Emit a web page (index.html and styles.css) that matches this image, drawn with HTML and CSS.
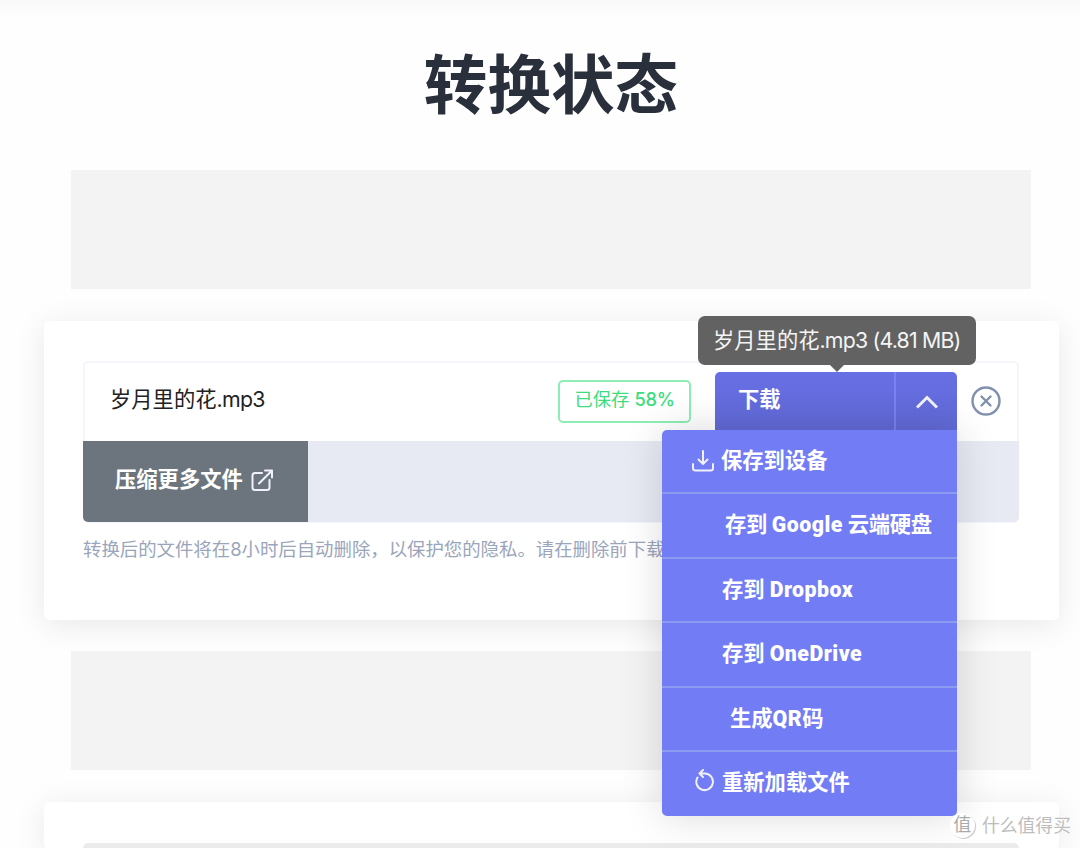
FILE: index.html
```
<!DOCTYPE html>
<html lang="zh">
<head>
	<meta charset="UTF-8">
	<title>转换状态</title>
	<link rel="stylesheet" href="styles.css">
</head>
<body>
	<div class="topline"></div>
	<div class="container">
		<h1 class="title">转换状态</h1>
		<div class="banner"></div>

		<div class="card">
			<div class="file-box">
				<div class="file-row">
					<span class="file-name">岁月里的花<span class="ext">.mp3</span></span>
					<span class="badge">已保存 <span class="percent">58%</span></span>
					<div class="download">
						<a class="btn-download" href="javascript:;"><span>下载</span></a>
						<a class="btn-toggle" href="javascript:;">
							<svg width="24" height="16" viewBox="0 0 24 16"><path d="M2 13.5 12 3.5l10 10"/></svg>
						</a>
						<div class="tooltip">岁月里的花<span class="tip-ext">.mp3 (4.81 MB)</span></div>
						<ul class="menu">
							<li>
								<svg class="icon-save" width="24" height="24" viewBox="0 0 24 24"><path d="M12 2v13M7.500 10.500 12 15l4.500-4.500M2 15v4q0 2.500 2.500 2.500h15q2.500 0 2.500-2.500v-4"/></svg>
								<span class="save">保存到设备</span>
							</li>
							<li><span class="google">存到 <b class="latin">Google</b> 云端硬盘</span></li>
							<li><span class="dropbox">存到 <b class="latin">Dropbox</b></span></li>
							<li><span class="onedrive">存到 <b class="latin">OneDrive</b></span></li>
							<li><span class="qr">生成<b class="latin">QR</b>码</span></li>
							<li>
								<svg class="icon-reload" width="24" height="24" viewBox="0 0 24 24"><path d="M8 4.500h5a8.300 8.300 0 1 1-7.500 4M11 1 7.500 4.500 11 8"/></svg>
								<span class="reload">重新加载文件</span>
							</li>
						</ul>
					</div>
					<a class="btn-close" href="javascript:;">
						<svg width="30" height="30" viewBox="0 0 30 30"><circle cx="15" cy="15" r="13.500"/><path d="m10.500 10.500 9 9m0-9-9 9"/></svg>
					</a>
				</div>
				<div class="more-row">
					<a class="btn-more" href="javascript:;">
						<span>压缩更多文件</span>
						<svg width="24" height="24" viewBox="0 0 24 24"><path d="M12 5H5Q2.500 5 2.500 7.500v12Q2.500 22 5 22h12q2.500 0 2.500-2.500V12M9 15.500 22 2.500M15 2.500h7v7"/></svg>
					</a>
				</div>
			</div>
			<p class="note">转换后的文件将在<span class="hours">8</span>小时后自动删除，以保护您的隐私。请在删除前下载。</p>
		</div>

		<div class="banner second"></div>
		<div class="card next">
			<div class="next-box"></div>
		</div>
	</div>

	<div class="watermark">
		<span class="mark">值</span>
		<span>什么值得买</span>
	</div>
</body>
</html>
```
FILE: styles.css
```
* {
	margin: 0;
	padding: 0;
	box-sizing: border-box;
}
body {
	height: 848px;
	position: relative;
	background: #fefefe;
	font-family: "Inter", "Noto Sans CJK SC", sans-serif;
	font-size: 21.3px;
}
li {
	list-style: none;
}
a {
	text-decoration: none;
}
svg {
	display: block;
	flex: none;
	fill: none;
	stroke: #f0f1fa;
	stroke-width: 2;
	stroke-linecap: round;
	stroke-linejoin: round;
}
.topline {
	height: 16px;
	background: linear-gradient(#f8f8f8, #fefefe);
}
.container {
	width: 1015px;
	height: 832px;
	margin-left: 43.5px;
}
.title {
	height: 154px;
	padding-top: 17px;
	line-height: 94px;
	text-align: center;
	font-family: "Noto Sans CJK SC", sans-serif;
	font-size: 63.6px;
	font-weight: 700;
	color: #29303b;
}
.banner {
	width: 960px;
	height: 119px;
	margin: 0 auto;
	background: #f3f3f3;
}
.banner.second {
	margin-top: 31px;
}

.card {
	height: 299px;
	margin-top: 32px;
	padding: 40px 39.5px;
	border-radius: 5px;
	background: #fff;
	box-shadow: 0 5px 32px rgba(0, 0, 0, 0.09);
}
.file-box {
	height: 162px;
	border: 2px solid #f5f6fb;
	border-radius: 5px;
}
.file-row {
	display: flex;
	height: 78px;
	padding: 0 16px 0 25px;
}
.file-name {
	flex: 1;
	line-height: 72px;
	color: #222;
}
.ext {
	letter-spacing: -0.7px;
}
.badge {
	width: 133px;
	height: 43px;
	margin: 17px 24px 0 0;
	border: 2px solid #8deeb5;
	border-radius: 5px;
	line-height: 35px;
	text-align: center;
	font-size: 18.3px;
	color: #3ddc7e;
	white-space: nowrap;
}
.percent {
	font-weight: 500;
	letter-spacing: -0.3px;
}

/*下载按钮*/
.download {
	display: flex;
	width: 242px;
	height: 59px;
	margin-top: 9px;
	position: relative;
}
.btn-download, .btn-toggle {
	background: linear-gradient(#676fe4, #6169d6);
	color: #fff;
}
.btn-download {
	width: 179px;
	padding-left: 23px;
	border-radius: 5px 0 0 0;
	line-height: 54px;
	font-weight: 700;
}
.btn-toggle {
	flex: 1;
	display: flex;
	align-items: center;
	justify-content: center;
	border-left: 2px solid #7a81f0;
	border-radius: 0 5px 0 0;
}
.btn-toggle svg {
	stroke-width: 3;
	stroke-linecap: butt;
	stroke-linejoin: miter;
}
.tooltip {
	width: 278px;
	height: 49px;
	position: absolute;
	top: -56px;
	left: -17px;
	z-index: 3;
	border-radius: 7px;
	background: #626262;
	line-height: 48px;
	padding-left: 15px;
	color: #f4f4f4;
	white-space: nowrap;
}
.tip-ext {
	letter-spacing: -0.8px;
}
.tooltip::after {
	content: '';
	position: absolute;
	top: 48px;
	left: 131px;
	border: 8px solid transparent;
	border-top-color: #626262;
	border-bottom: 0;
}
.menu {
	width: 295px;
	position: absolute;
	top: 58px;
	right: 0;
	z-index: 2;
	border-radius: 5px 0 5px 5px;
	background: #727cf5;
	box-shadow: 0 0 40px rgba(0, 0, 0, 0.15);
	color: #fff;
	font-weight: 700;
}
.menu li {
	display: flex;
	height: 64.4px;
	padding-left: 60px;
	line-height: 60px;
	border-bottom: 2px solid #8b9bef;
	white-space: nowrap;
}
.menu li:last-child {
	border-bottom: 0;
}
.menu svg {
	margin: 19px 6px 0 -31px;
}
.menu .icon-reload {
	margin: 17px 6px 0 -30px;
}
.latin {
	font-family: "Roboto", sans-serif;
	letter-spacing: 0.5px;
}
.menu .google {
	padding-left: 3px;
	letter-spacing: -0.3px;
}
.menu .qr {
	padding-left: 8px;
}
.btn-close {
	margin: 23px 0 0 14px;
}
.btn-close svg {
	stroke: #8191ad;
	stroke-width: 2.4;
}

.more-row {
	height: 81px;
	margin: 0 -2px;
	border-radius: 0 0 5px 5px;
	background: #e7eaf3;
}
.btn-more {
	display: flex;
	width: 225px;
	height: 81px;
	padding-left: 32px;
	border-radius: 0 0 0 5px;
	background: #6c757d;
	line-height: 77px;
	font-weight: 700;
	color: #fff;
}
.btn-more svg {
	margin: 27px 0 0 7px;
}
.note {
	margin-top: 11px;
	line-height: 30px;
	font-size: 18.4px;
	color: #9aa5bc;
	white-space: nowrap;
}
.card.next {
	height: 47px;
	padding: 41px 39.5px 0;
}
.next-box {
	height: 6px;
	border-radius: 5px 5px 0 0;
	background: #ebebeb;
}

/*水印*/
.watermark {
	display: flex;
	align-items: center;
	position: absolute;
	top: 812px;
	left: 950px;
	z-index: 5;
	font-size: 17.8px;
	line-height: 27px;
	color: #bdbdbd;
	text-shadow: -1px -1px 0 #fff;
	white-space: nowrap;
}
.mark {
	width: 25px;
	height: 25px;
	margin-right: 7px;
	border-radius: 50%;
	background: #fff;
	box-shadow: 1px 1px 0 #ccc;
	line-height: 24px;
	text-align: center;
	color: #aaa;
}
```
